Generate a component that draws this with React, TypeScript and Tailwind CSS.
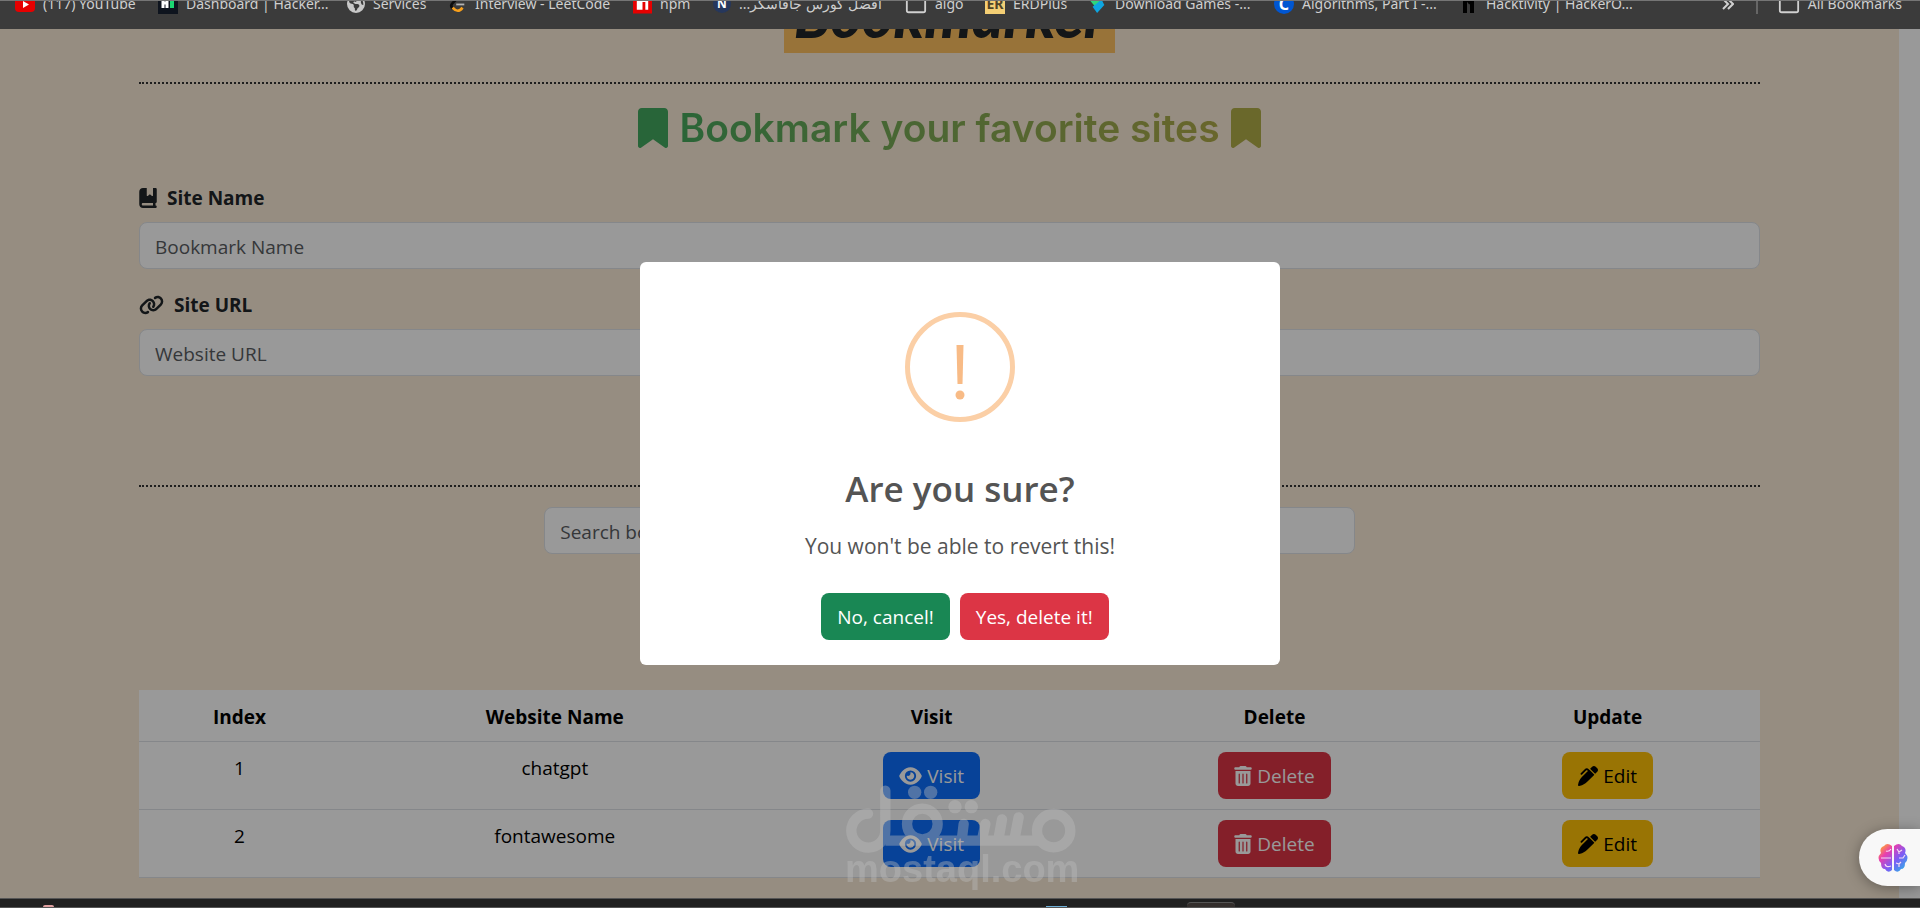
import type { ReactNode } from 'react';
import {
  FaBookBookmark,
  FaBookmark,
  FaEarthAmericas,
  FaEye,
  FaLink,
  FaPenClip,
  FaTrashCan,
} from 'react-icons/fa6';
import { FiFolder } from 'react-icons/fi';

type Tab = {
  label: string;
  width: string;
  icon: ReactNode;
  rtl?: boolean;
};

const tabs: Tab[] = [
  {
    label: '(117) YouTube',
    width: 'w-[143px]',
    icon: (
      <svg viewBox="0 0 20 20" className="h-5 w-5 shrink-0">
        <rect y="3" width="20" height="15" rx="4" fill="#e60000" />
        <path d="M8 7v7l6-3.500z" fill="#fff" />
      </svg>
    ),
  },
  {
    label: 'Dashboard | Hacker...',
    width: 'w-[189px]',
    icon: (
      <svg viewBox="0 0 20 20" className="h-5 w-5 shrink-0">
        <rect width="20" height="20" fill="#0e141e" />
        <path d="M5 4v10M9 4v10M5 9h4" stroke="#fff" strokeWidth="3" />
        <rect x="12" y="4" width="4" height="10" fill="#1bd672" />
      </svg>
    ),
  },
  {
    label: 'Services',
    width: 'w-[102px]',
    icon: <FaEarthAmericas className="h-[18px] w-[18px] shrink-0 text-[#c8c8c8]" />,
  },
  {
    label: 'Interview - LeetCode',
    width: 'w-[184px]',
    icon: (
      <svg viewBox="0 0 20 20" className="h-5 w-[18px] shrink-0" fill="none" strokeWidth="3">
        <path d="M10 3 4 9q-3 3 0 6" stroke="#0d0d0d" />
        <path d="M4 14q6 7 11 0" stroke="#f89f1b" />
        <path d="M8 10.500h9" stroke="#b3b3b3" strokeWidth="2" />
      </svg>
    ),
  },
  {
    label: 'npm',
    width: 'w-[80px]',
    icon: (
      <svg viewBox="0 0 20 20" className="h-5 w-[19px] shrink-0">
        <rect width="20" height="20" fill="#e60000" />
        <path d="M4 4h12v12h-3V8h-3v8H4z" fill="#fff" />
      </svg>
    ),
  },
  {
    label: 'افضل كورس جافاسكر...',
    width: 'w-[192px]',
    rtl: true,
    icon: (
      <span className="flex h-[18px] w-[18px] shrink-0 items-center justify-center rounded-full bg-[#26375c] text-xs font-bold text-white">
        N
      </span>
    ),
  },
  {
    label: 'algo',
    width: 'w-[80px]',
    icon: <FiFolder className="h-[22px] w-[22px] shrink-0 text-[#d0d0d0]" />,
  },
  {
    label: 'ERDPlus',
    width: 'w-[104px]',
    icon: (
      <span className="flex h-5 w-5 shrink-0 items-center justify-center bg-[#f3ce74] text-sm font-bold text-[#4f4327]">
        ER
      </span>
    ),
  },
  {
    label: 'Download Games -...',
    width: 'w-[185px]',
    icon: (
      <svg viewBox="0 0 20 20" className="h-5 w-[18px] shrink-0">
        <path d="M1 6 7 0l6 6-6 7z" fill="#2fd67b" />
        <path d="M4 13 14 5l3 6-8 9z" fill="#0ea5e0" />
      </svg>
    ),
  },
  {
    label: 'Algorithms, Part I -...',
    width: 'w-[188px]',
    icon: (
      <span className="flex h-5 w-5 shrink-0 items-center justify-center rounded-full bg-[#0056d2] text-base font-bold text-white">
        C
      </span>
    ),
  },
  {
    label: 'Hacktivity | HackerO...',
    width: 'w-[180px]',
    icon: (
      <svg viewBox="0 0 16 20" className="h-5 w-4 shrink-0" fill="none" stroke="#000" strokeWidth="4">
        <path d="M3 2v17M6 9l4-3v13" />
      </svg>
    ),
  },
];

const sites = [
  { id: 1, name: 'chatgpt' },
  { id: 2, name: 'fontawesome' },
];

const inputClass =
  'block h-[47px] w-full rounded-lg border border-[#dee2e6] bg-white px-[15px] pt-[3px] text-[19px] text-[#212529] placeholder:text-[#595c5f]';
const buttonClass = 'inline-flex h-[47px] items-center gap-[5px] rounded-lg px-4 pt-[2px] text-[19px]';

function BookmarksBar() {
  return (
    <header className="h-[29px] shrink-0 overflow-hidden border-t border-[#757575] bg-[#3b3b3b] font-['Noto_Sans',sans-serif] text-sm text-[#cfcfcf]">
      <nav className="-mt-[7px] flex h-5 items-center pr-[18px] pl-[15px]">
        {tabs.map((tab) => (
          <a
            key={tab.label}
            href="#"
            className={`flex shrink-0 items-center gap-2 whitespace-nowrap ${tab.width}`}
          >
            {tab.icon}
            <span dir={tab.rtl ? 'rtl' : 'ltr'}>{tab.label}</span>
          </a>
        ))}
        <button type="button" aria-label="More" className="ml-auto pr-[22px]">
          <svg viewBox="0 0 12 12" className="h-3 w-3" fill="none" stroke="currentColor" strokeWidth="2">
            <path d="m1 1 5 5-5 5M6 1l5 5-5 5" />
          </svg>
        </button>
        <span className="mr-5 h-5 w-[2px] bg-[#666]" />
        <a href="#" className="flex items-center gap-2 whitespace-nowrap">
          <FiFolder className="h-[22px] w-[22px] text-[#d0d0d0]" />
          All Bookmarks
        </a>
      </nav>
    </header>
  );
}

function SitesTable() {
  return (
    <table className="mt-[136px] w-full table-fixed border-collapse bg-white text-center text-[19px] leading-[30px] text-black">
      <colgroup>
        <col className="w-[12.4%]" />
        <col className="w-[26.5%]" />
        <col className="w-[20%]" />
        <col className="w-[22.3%]" />
        <col />
      </colgroup>
      <thead>
        <tr className="h-[51px] border-b border-[#dee2e6]">
          <th className="pt-1">Index</th>
          <th className="pt-1">Website Name</th>
          <th className="pt-1">Visit</th>
          <th className="pt-1">Delete</th>
          <th className="pt-1">Update</th>
        </tr>
      </thead>
      <tbody>
        {sites.map((site) => (
          <tr key={site.id} className="h-[68px] border-b border-[#dee2e6] align-top">
            <td className="pt-[11px]">{site.id}</td>
            <td className="pt-[11px]">{site.name}</td>
            <td className="pt-[10px]">
              <button type="button" className={`${buttonClass} bg-[#0d6efd] text-white`}>
                <FaEye className="h-5 w-[23px]" />
                Visit
              </button>
            </td>
            <td className="pt-[10px]">
              <button type="button" className={`${buttonClass} bg-[#dc3545] text-white`}>
                <FaTrashCan className="h-5 w-[18px]" />
                Delete
              </button>
            </td>
            <td className="pt-[10px]">
              <button type="button" className={`${buttonClass} bg-[#ffc107] text-black`}>
                <FaPenClip className="h-5 w-5" />
                Edit
              </button>
            </td>
          </tr>
        ))}
      </tbody>
    </table>
  );
}

function ConfirmDialog() {
  return (
    <div className="absolute inset-0 flex items-center justify-center bg-black/40">
      <div
        role="dialog"
        aria-labelledby="confirm-title"
        className="flex w-[640px] max-w-full flex-col items-center rounded-md bg-white pt-[50px] pb-[25px] text-[#545454]"
      >
        <svg viewBox="0 0 110 110" className="mb-[43px] h-[110px] w-[110px]">
          <circle cx="55" cy="55" r="52.500" fill="none" stroke="#fbcfa6" strokeWidth="5" />
          <path d="M51.500 33h7l-1 39h-5z" fill="#f8bb86" />
          <circle cx="55" cy="83" r="4.500" fill="#f8bb86" />
        </svg>
        <h2 id="confirm-title" className="text-[35px] leading-[48px] font-semibold">
          Are you sure?
        </h2>
        <p className="mt-[18px] text-[21px] leading-[30px]">You won't be able to revert this!</p>
        <div className="mt-[32px] ml-[10px] flex gap-[10px]">
          <button type="button" className={`${buttonClass} bg-[#198754] text-white`}>
            No, cancel!
          </button>
          <button type="button" className={`${buttonClass} bg-[#dc3545] text-white`}>
            Yes, delete it!
          </button>
        </div>
      </div>
    </div>
  );
}

function Watermark() {
  return (
    <div className="pointer-events-none absolute bottom-[14px] left-1/2 w-[230px] -translate-x-1/2 text-[#bdbdbd] opacity-40">
      <svg viewBox="24 8 702 210" className="h-[70px] w-[234px]" fill="none" stroke="currentColor" strokeWidth="31">
        <path d="M93 97a51 51 0 1 0 52 51V28" strokeLinecap="round" />
        <circle cx="256" cy="128" r="46" />
        <circle cx="650" cy="148" r="50" />
        <path d="M145 178h475" />
        <path d="m380 128-5 42m70-42-9 42m59-56-10 56m60-62-12 62" strokeLinecap="round" />
        <g fill="currentColor" stroke="none">
          <circle cx="233" cy="33" r="20" />
          <circle cx="281" cy="33" r="20" />
          <circle cx="354" cy="76" r="20" />
          <circle cx="403" cy="76" r="20" />
        </g>
      </svg>
      <p className="text-center font-['Liberation_Sans',Arial,sans-serif] text-[38px] leading-[30px] font-bold">
        mostaql.com
      </p>
    </div>
  );
}

function AssistantButton() {
  return (
    <button
      type="button"
      aria-label="Assistant"
      className="absolute right-0 bottom-[12px] flex h-[57px] w-[61px] items-center rounded-l-full bg-[#f8f8f8] pl-[19px] shadow-[0_2px_14px_rgba(0,0,0,0.35)]"
    >
      <svg viewBox="0 0 30 28" className="h-7 w-[30px]">
        <defs>
          <linearGradient id="brain" x1="0" y1="0" x2="1" y2="1">
            <stop offset="0.1" stopColor="#ff9a3d" />
            <stop offset="0.3" stopColor="#e93fae" />
            <stop offset="0.6" stopColor="#7c5cf5" />
            <stop offset="0.9" stopColor="#35a8e8" />
          </linearGradient>
        </defs>
        <path
          d="M14 2Q9-2 6 2 1 4 3 9q-5 5 0 10 0 6 4 6 3 5 7 1zM16 2q5-4 8 0 5 2 3 7 5 5 0 10 0 6-4 6-3 5-7 1z"
          fill="url(#brain)"
        />
        <path
          d="M13 5q-2 3-5 2M3 14h10M13 22q-5 2-6-2M19 5l2 3 3-2M21 8v2M21 14l4 0 2-3M18 19l3 1 2-2M21 20v3"
          fill="none"
          stroke="#f6d9f5"
          strokeWidth="1.200"
        />
      </svg>
    </button>
  );
}

export default function App() {
  return (
    <div className="flex h-screen flex-col overflow-hidden bg-[#202020] font-['Open_Sans','Segoe_UI',sans-serif]">
      <BookmarksBar />

      <div className="relative flex min-h-0 flex-1 overflow-hidden">
        <main className="min-w-0 flex-1 bg-[#faebd7] text-[#212529]">
          <div className="mx-auto w-11/12 max-w-[1621px]">
            <h1 className="-mt-[51px] text-center font-['Lato',sans-serif] text-[60px] leading-[75px] font-black italic">
              <span className="inline-block bg-[#fdc060] px-[10px]">Bookmarker</span>
            </h1>
            <hr className="mt-[29px] border-t-2 border-dotted border-[#333]" />

            <h2 className="mt-[20px] flex h-12 items-center justify-center gap-[11px] font-['Inter',sans-serif] text-[39px] font-semibold">
              <FaBookmark className="h-10 w-[30px] text-[#44a860]" />
              <span className="bg-gradient-to-r from-[#46a95d] to-[#afab49] bg-clip-text text-transparent">
                Bookmark your favorite sites
              </span>
              <FaBookmark className="h-10 w-[30px] text-[#b1ad49]" />
            </h2>

            <form>
              <label
                htmlFor="site-name"
                className="mt-[31px] mb-[9px] flex h-[30px] items-center gap-[10px] text-[19px] font-bold"
              >
                <FaBookBookmark className="h-5 w-[18px]" />
                Site Name
              </label>
              <input id="site-name" type="text" placeholder="Bookmark Name" className={inputClass} />
              <label
                htmlFor="site-url"
                className="mt-[21px] mb-[9px] flex h-[30px] items-center gap-[10px] text-[19px] font-bold"
              >
                <FaLink className="h-5 w-[25px]" />
                Site URL
              </label>
              <input id="site-url" type="text" placeholder="Website URL" className={inputClass} />
            </form>

            <hr className="mt-[109px] border-t-2 border-dotted border-[#333]" />
            <div className="mx-auto mt-[20px] w-1/2">
              <input type="search" aria-label="Search" placeholder="Search bookmarks" className={inputClass} />
            </div>

            <SitesTable />
          </div>
        </main>
        <div className="w-[21px] shrink-0 bg-white" />

        <ConfirmDialog />
        <Watermark />
        <AssistantButton />
      </div>

      <footer className="flex h-[10px] shrink-0 items-end border-t border-b border-[#555] bg-[#202020]">
        <span className="ml-[43px] h-[2px] w-[11px] rounded-t-full bg-[#e0a0a0]" />
        <span className="ml-auto h-[1px] w-[21px] bg-[#6fb0d8]" />
        <span className="mr-[685px] ml-[120px] h-[5px] w-[48px] rounded-t border-t border-[#555] bg-[#332e2c]" />
      </footer>
    </div>
  );
}
